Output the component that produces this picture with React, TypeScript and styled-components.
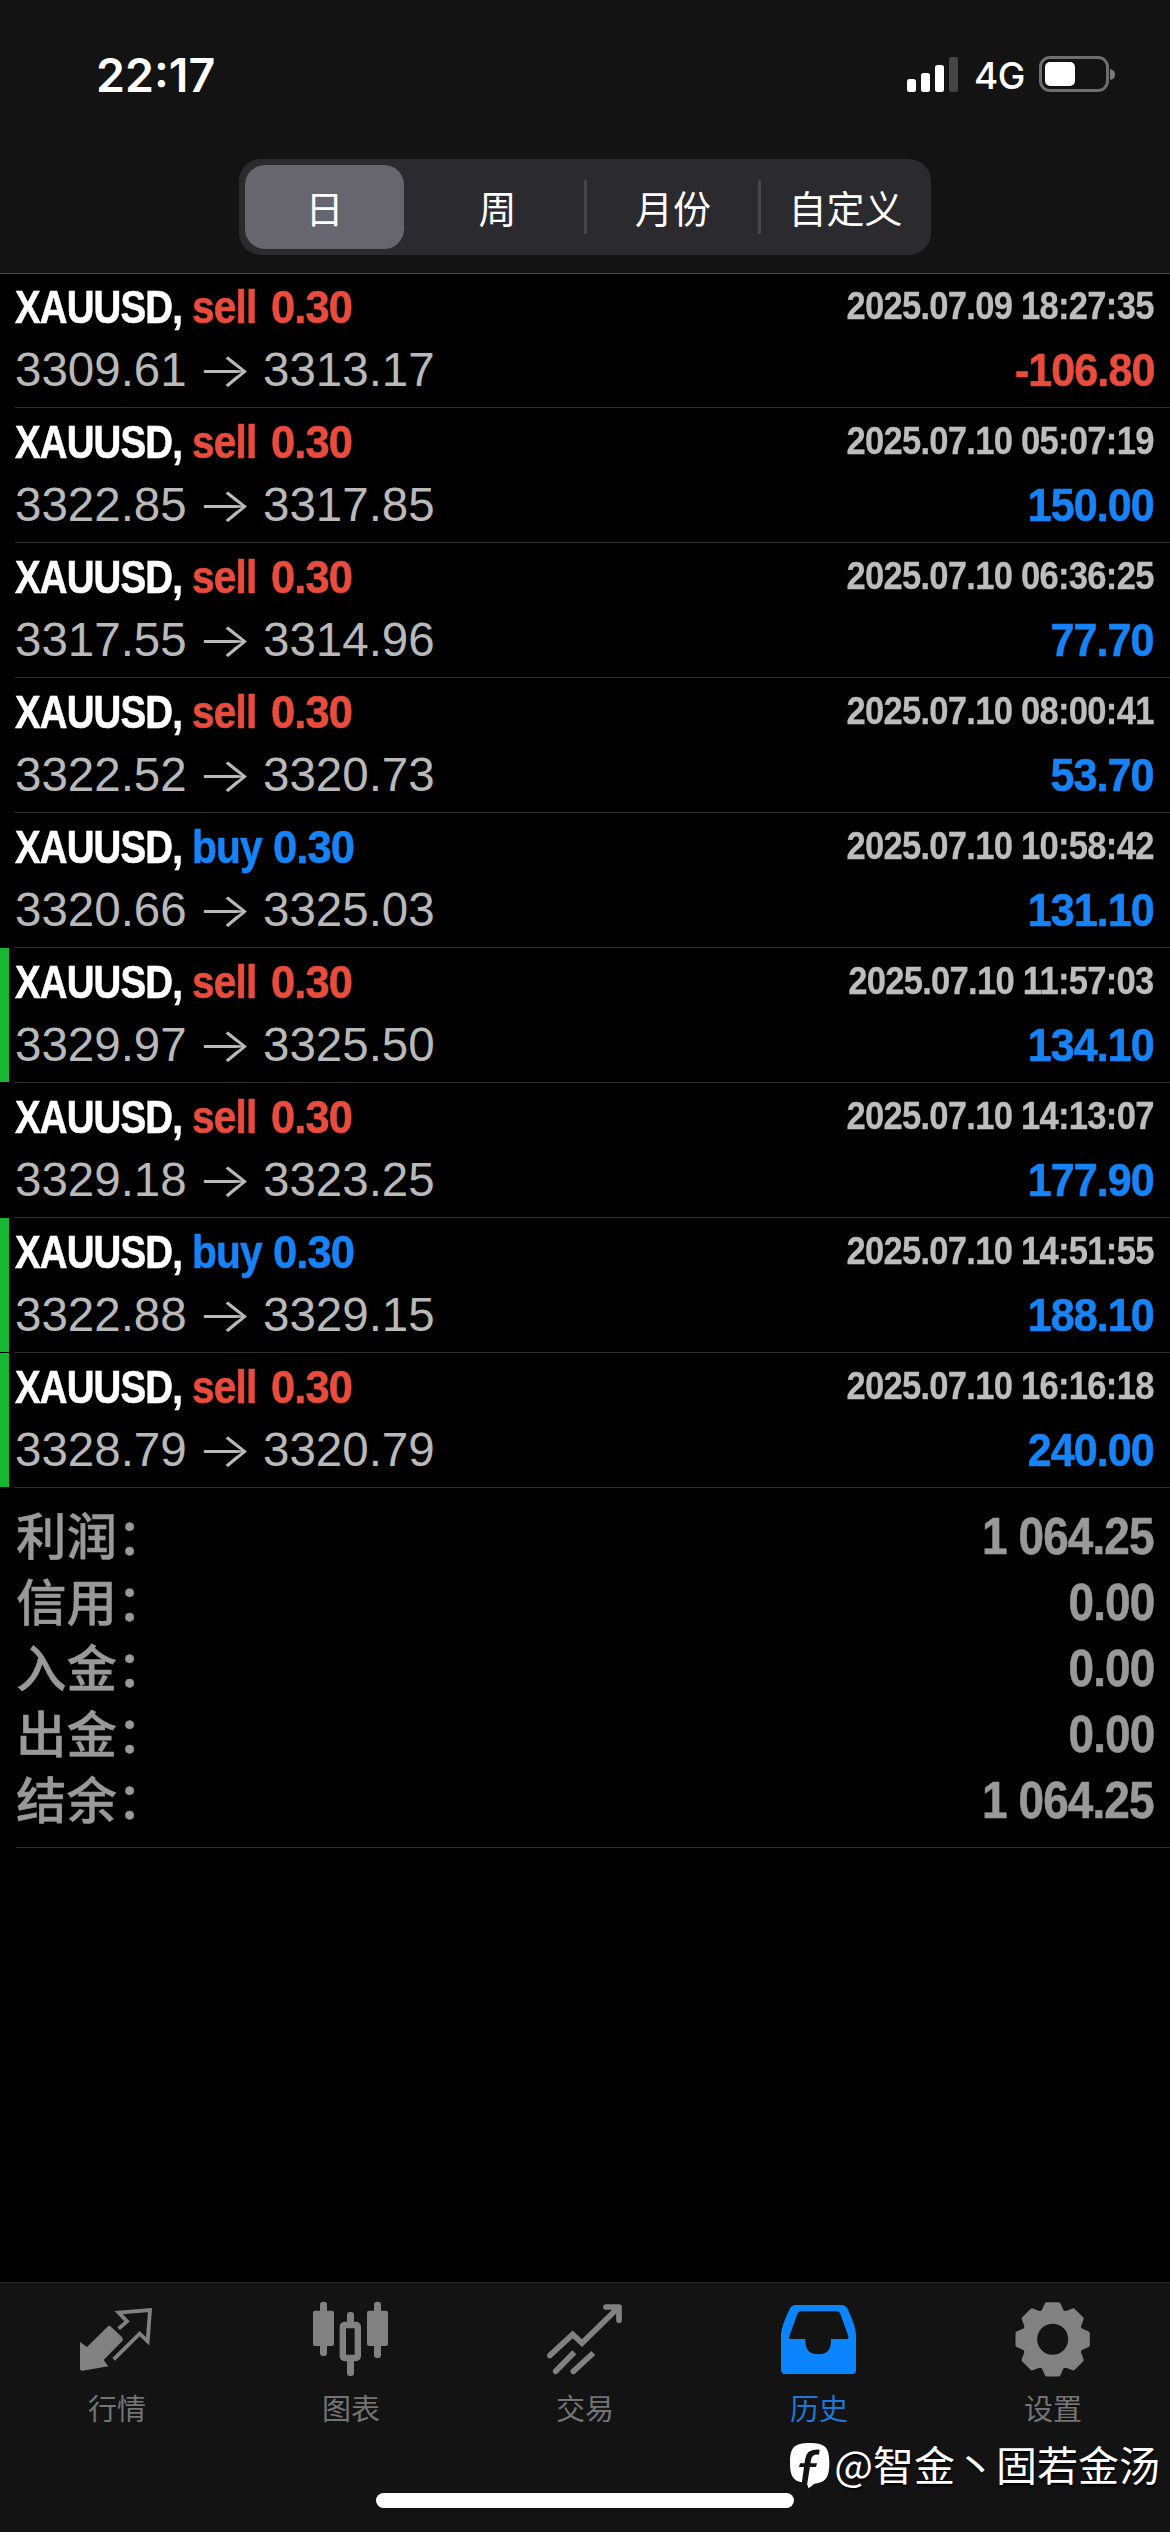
import React from "react";
import styled, { createGlobalStyle } from "styled-components";

const latin = `"Liberation Sans", Arial, "Noto Sans CJK SC", sans-serif`;
const cjk = `"Noto Sans CJK SC", sans-serif`;
const blue = "#1683f8";
const red = "#e94b3c";

const GlobalStyle = createGlobalStyle`
  *, *::before, *::after { box-sizing: border-box; }
  body { margin: 0; background: #000; }
`;

const Screen = styled.div`
  position: relative;
  display: flex;
  flex-direction: column;
  width: 1170px;
  height: 2532px;
  overflow: hidden;
  background: #000;
  color: #fff;
  font-family: ${latin};
`;

const Header = styled.header`
  flex: none;
  display: flex;
  flex-direction: column;
  height: 274px;
  background: #131313;
  border-bottom: 1px solid #48484a;
`;

const StatusBar = styled.div`
  display: flex;
  align-items: center;
  height: 159px;
  padding: 0 55px 11px 96px;
`;

const Clock = styled.time`
  flex: 1;
  padding-top: 2px;
  font: 600 46.5px/54px Inter, sans-serif;
`;

const Signal = styled.svg`
  flex: none;
  width: 52px;
  height: 36px;
`;

const Network = styled.span`
  flex: none;
  width: 80px;
  padding: 3px 0 0 15px;
  font: 500 37px/44px Inter, sans-serif;
  letter-spacing: -0.5px;
  white-space: nowrap;
`;

const Battery = styled.svg`
  flex: none;
  width: 76px;
  height: 38px;
`;

const Segments = styled.div`
  display: grid;
  grid-template-columns: 159px 182px 174px auto;
  align-self: center;
  width: 692px;
  height: 96px;
  padding: 6px 0 6px 6px;
  border-radius: 22px;
  background: #2b2a2f;
`;

const Segment = styled.button<{ $selected?: boolean; $divided?: boolean }>`
  display: flex;
  align-items: center;
  justify-content: center;
  position: relative;
  padding: 0;
  border: 0;
  border-radius: 20px;
  background: ${(p) => (p.$selected ? "#67656d" : "transparent")};
  color: #fff;
  font: 400 38px/50px ${cjk};
  &:nth-child(2) { padding-left: 5px; }
  &::after {
    content: "";
    display: ${(p) => (p.$divided ? "block" : "none")};
    position: absolute;
    right: -1px;
    top: 15px;
    width: 3px;
    height: 54px;
    border-radius: 2px;
    background: #48474c;
  }
`;

const List = styled.ul`
  margin: 0;
  padding: 0;
  list-style: none;
`;

const Row = styled.li<{ $marked?: boolean }>`
  height: 135px;
  padding: 2px 16px 0 15px;
  background:
    linear-gradient(#2e2e2f, #2e2e2f) 15px 100% / 1155px 1px no-repeat,
    linear-gradient(${(p) => (p.$marked ? "#17b733, #17b733" : "#000, #000")}) 0 0 / 9px 134px no-repeat;
  &:first-child {
    height: 134px;
    padding-top: 1px;
  }
`;

const Line = styled.div`
  display: flex;
  justify-content: space-between;
  height: 63px;
  line-height: 63px;
  white-space: nowrap;
`;

const Title = styled.div<{ $side: string }>`
  display: grid;
  grid-template-columns: 177px ${(p) => (p.$side === "buy" ? "81px" : "78.5px")} auto;
  font-size: 47px;
  font-weight: 700;
  letter-spacing: -1px;
  -webkit-text-stroke: 0.6px;
`;

const Squeezed = styled.span<{ $ratio: number; $color?: string }>`
  display: block;
  color: ${(p) => p.$color ?? "inherit"};
  transform: scaleX(${(p) => p.$ratio});
  transform-origin: left center;
`;

const Stamp = styled.time`
  color: #bdbdbe;
  font-size: 38px;
  font-weight: 700;
  letter-spacing: -0.8px;
  -webkit-text-stroke: 0.3px;
  transform: scaleX(0.91);
  transform-origin: right center;
`;

const Prices = styled.div`
  display: grid;
  grid-template-columns: 187px 61px auto;
  color: #b9b9ba;
  font-size: 47.5px;
`;

const Arrow = styled.span`
  font-family: Inter, sans-serif;
  font-weight: 300;
  transform: scaleX(1.24);
  transform-origin: 23px center;
`;

const Profit = styled.div<{ $loss: boolean }>`
  color: ${(p) => (p.$loss ? red : blue)};
  font-size: 47px;
  font-weight: 700;
  letter-spacing: -1px;
  -webkit-text-stroke: 0.6px;
  transform: scaleX(0.915);
  transform-origin: right center;
`;

const Summary = styled.dl`
  margin: 0 0 0 16px;
  height: 360px;
  padding: 16px 16px 0 0;
  border-bottom: 1px solid #2e2e2f;
`;

const SummaryLine = styled.div`
  display: flex;
  justify-content: space-between;
  height: 66px;
  line-height: 66px;
  color: #999;
`;

const Label = styled.dt`
  margin-top: -4px;
  font-family: ${cjk};
  font-size: 50.5px;
  font-weight: 500;
  -webkit-text-stroke: 0.4px;
`;

const Amount = styled.dd`
  margin: 0;
  font-size: 51px;
  font-weight: 700;
  letter-spacing: -1px;
  -webkit-text-stroke: 0.6px;
  transform: scaleX(0.9);
  transform-origin: right center;
`;

const TabBar = styled.nav`
  display: flex;
  flex-direction: column;
  align-items: center;
  margin-top: auto;
  height: 250px;
  background: #131313;
  border-top: 1px solid #29292a;
`;

const Tabs = styled.div`
  display: grid;
  grid-template-columns: repeat(5, 234px);
  height: 210px;
`;

const Tab = styled.a<{ $active?: boolean }>`
  display: flex;
  flex-direction: column;
  align-items: center;
  padding-top: 16px;
  color: ${(p) => (p.$active ? "#0b84ff" : "#818181")};
  font: 400 29px/44px ${cjk};
`;

const Icon = styled.svg`
  width: 84px;
  height: 84px;
  margin-bottom: 2px;
`;

const TabLabel = styled.span<{ $active?: boolean }>`
  color: ${(p) => (p.$active ? "#1d78d8" : "#747474")};
`;

const HomeIndicator = styled.div`
  width: 418px;
  height: 15px;
  border-radius: 8px;
  background: #fff;
`;

const Watermark = styled.div`
  position: absolute;
  right: 10px;
  bottom: 39px;
  display: flex;
  align-items: center;
  color: #fff;
  font: 400 41px/60px ${cjk};
  white-space: nowrap;
  text-shadow: 1px 2px 2px #000;
`;

const Logo = styled.svg`
  width: 42px;
  height: 48px;
  margin: 6px 3px 0 0;
`;

const deals = [
  { side: "sell", from: "3309.61", to: "3313.17", time: "2025.07.09 18:27:35", profit: "-106.80" },
  { side: "sell", from: "3322.85", to: "3317.85", time: "2025.07.10 05:07:19", profit: "150.00" },
  { side: "sell", from: "3317.55", to: "3314.96", time: "2025.07.10 06:36:25", profit: "77.70" },
  { side: "sell", from: "3322.52", to: "3320.73", time: "2025.07.10 08:00:41", profit: "53.70" },
  { side: "buy", from: "3320.66", to: "3325.03", time: "2025.07.10 10:58:42", profit: "131.10" },
  { side: "sell", from: "3329.97", to: "3325.50", time: "2025.07.10 11:57:03", profit: "134.10", marked: true },
  { side: "sell", from: "3329.18", to: "3323.25", time: "2025.07.10 14:13:07", profit: "177.90" },
  { side: "buy", from: "3322.88", to: "3329.15", time: "2025.07.10 14:51:55", profit: "188.10", marked: true },
  { side: "sell", from: "3328.79", to: "3320.79", time: "2025.07.10 16:16:18", profit: "240.00", marked: true },
];

const totals = [
  ["利润：", "1 064.25"],
  ["信用：", "0.00"],
  ["入金：", "0.00"],
  ["出金：", "0.00"],
  ["结余：", "1 064.25"],
];

const polar = (r: number, deg: number) => {
  const a = (deg * Math.PI) / 180;
  return `${(908 + r * Math.sin(a)).toFixed(1)} ${(238 - r * Math.cos(a)).toFixed(1)}`;
};

const gearOutline =
  "M" +
  Array.from({ length: 8 }, (_, i) => i * 45)
    .flatMap((t) => [polar(87, t - 19), polar(107, t - 9.5), polar(107, t + 9.5), polar(87, t + 19)])
    .join("L") +
  "Z";

const QuotesIcon = () => (
  <Icon viewBox="225 117 252 252" fill="currentColor">
    <path d="M240 246L261 261L321 202Q327 194 333 200L365 230Q371 236 367 243L311 300L325 319L248 332Q240 333 240 326Z" />
    <path d="M356 206L381 184L356 158L450 150L443 244L419 221L341 298" fill="none" stroke="currentColor" strokeWidth="11.5" />
  </Icon>
);

const ChartIcon = () => (
  <Icon viewBox="927 117 252 252" fill="currentColor">
    <rect x="960" y="125" width="21" height="163" rx="9" />
    <rect x="939" y="152" width="63" height="106" rx="6" />
    <rect x="1122" y="125" width="21" height="169" rx="9" />
    <rect x="1101" y="152" width="63" height="106" rx="6" />
    <rect x="1041" y="156" width="21" height="40" rx="9" />
    <rect x="1041" y="294" width="21" height="54" rx="9" />
    <rect x="1028.5" y="195" width="45" height="99" rx="5" fill="none" stroke="currentColor" strokeWidth="19" />
  </Icon>
);

const TradeIcon = () => (
  <Icon viewBox="429 117 252 252" fill="none" stroke="currentColor" strokeWidth="17">
    <path d="M449 287L518 223L546 249L650 148" />
    <path d="M467 334L523 277M520 334L580 279" />
    <path d="M618 141H657V181" strokeLinecap="round" strokeLinejoin="round" />
    <g fill="currentColor" stroke="none">
      <circle cx="449.500" cy="286.500" r="8.500" />
      <circle cx="467" cy="334" r="8.500" />
      <circle cx="520" cy="334" r="8.500" />
      <path d="M632 145H655V168Z" />
    </g>
  </Icon>
);

const HistoryIcon = () => (
  <Icon viewBox="81 117 252 252" fill="currentColor">
    <path
      fillRule="evenodd"
      d="M137 135H274Q287 135 293 147Q318 200 318 225V330Q318 342 306 342H105Q93 342 93 330V225Q93 200 119 147Q125 135 137 135ZM155 154H258Q268 154 272 164L295 229Q297 237 290 237H243V243Q243 283 205 283Q166 283 166 243V237H122Q115 237 118 229L141 164Q145 154 155 154Z"
    />
  </Icon>
);

const SettingsIcon = () => (
  <Icon viewBox="783 117 252 252" fill="currentColor">
    <mask id="gear-hole">
      <rect x="783" y="117" width="252" height="252" fill="#fff" />
      <circle cx="908" cy="238" r="46.500" fill="#000" />
    </mask>
    <path d={gearOutline} stroke="currentColor" strokeWidth="12" strokeLinejoin="round" mask="url(#gear-hole)" />
  </Icon>
);

const tabs = [
  { label: "行情", icon: <QuotesIcon /> },
  { label: "图表", icon: <ChartIcon /> },
  { label: "交易", icon: <TradeIcon /> },
  { label: "历史", icon: <HistoryIcon />, active: true },
  { label: "设置", icon: <SettingsIcon /> },
];

export default function App() {
  return (
    <Screen>
      <GlobalStyle />
      <Header>
        <StatusBar>
          <Clock>22:17</Clock>
          <Signal viewBox="0 0 52 36" fill="#fff">
            <rect x="0" y="23" width="9" height="13" rx="2.500" />
            <rect x="14" y="17" width="9" height="19" rx="2.500" />
            <rect x="28" y="9" width="9" height="27" rx="2.500" />
            <rect x="42" y="1" width="9" height="35" rx="2.500" fill="#454545" />
          </Signal>
          <Network>4G</Network>
          <Battery viewBox="0 0 76 38">
            <rect x="1.500" y="2.500" width="67" height="33" rx="9.500" fill="none" stroke="#6e6e6e" strokeWidth="3" />
            <rect x="6" y="7" width="30" height="24" rx="5" fill="#fff" />
            <path d="M71 14Q76 15 76 19.500Q76 24 71 25Z" fill="#7b7b7b" />
          </Battery>
        </StatusBar>
        <Segments>
          <Segment $selected>日</Segment>
          <Segment $divided>周</Segment>
          <Segment $divided>月份</Segment>
          <Segment>自定义</Segment>
        </Segments>
      </Header>

      <List>
        {deals.map((d) => (
          <Row key={d.time} $marked={d.marked}>
            <Line>
              <Title $side={d.side}>
                <Squeezed $ratio={0.817}>XAUUSD,</Squeezed>
                <Squeezed $ratio={0.865} $color={d.side === "sell" ? red : blue}>{d.side}</Squeezed>
                <Squeezed $ratio={0.925} $color={d.side === "sell" ? red : blue}>0.30</Squeezed>
              </Title>
              <Stamp>{d.time}</Stamp>
            </Line>
            <Line>
              <Prices>
                <span>{d.from}</span>
                <Arrow>→</Arrow>
                <span>{d.to}</span>
              </Prices>
              <Profit $loss={d.profit.startsWith("-")}>{d.profit}</Profit>
            </Line>
          </Row>
        ))}
      </List>

      <Summary>
        {totals.map(([label, value]) => (
          <SummaryLine key={label}>
            <Label>{label}</Label>
            <Amount>{value}</Amount>
          </SummaryLine>
        ))}
      </Summary>

      <TabBar>
        <Tabs>
          {tabs.map((t) => (
            <Tab key={t.label} $active={t.active}>
              {t.icon}
              <TabLabel $active={t.active}>{t.label}</TabLabel>
            </Tab>
          ))}
        </Tabs>
        <HomeIndicator />
      </TabBar>

      <Watermark>
        <Logo viewBox="114 558 126 144">
          <path
            fill="#fff"
            d="M176 561C222 561 235 574 235 620C235 664 224 679 190 683Q183 690 172 697L170 688L152 679C126 673 117 660 117 620C117 574 130 561 176 561Z"
          />
          <path d="M206 581Q165 577 162 612L152 683L168 688L180 612Q183 594 204 596Z" fill="#131313" />
          <path d="M147 622H198L195 633H144Z" fill="#131313" />
        </Logo>
        <span>@智金丶固若金汤</span>
      </Watermark>
    </Screen>
  );
}
